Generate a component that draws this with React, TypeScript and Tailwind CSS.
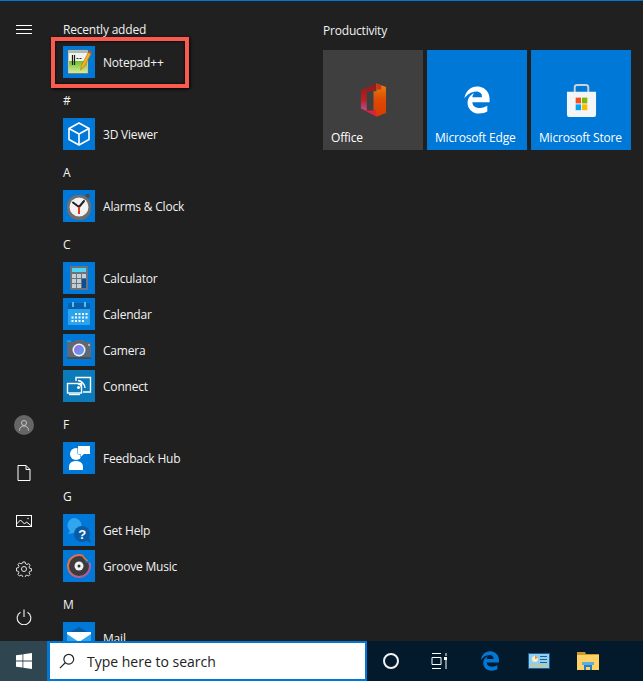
import React from "react";
import { FaEdgeLegacy } from "react-icons/fa";

const Notepad = () => (
  <svg viewBox="0 0 32 32" className="w-8 h-8">
    <defs>
      <linearGradient id="np" x1="0" y1="0" x2="0" y2="1">
        <stop offset="0" stopColor="#6fc02a" />
        <stop offset="1" stopColor="#d6ec9a" />
      </linearGradient>
    </defs>
    <rect x="5" y="4" width="20" height="23.500" fill="#f1f3ee" stroke="#66705f" strokeWidth="0.7" />
    <rect x="5.500" y="4.500" width="19" height="2.500" fill="#aebbb4" />
    <rect x="6" y="15" width="18" height="12" fill="url(#np)" />
    <path d="M9.500 9v10M11.500 9v10" stroke="#1c1c1c" strokeWidth="1.200" />
    <path d="M13.500 12.500h2M16.500 12.500h2" stroke="#333" strokeWidth="1.200" />
    <path d="M26.500 4.500L18.500 19l-1 5 3.800-3.300L28.800 6.500z" fill="#f3b01c" stroke="#9a6a10" strokeWidth="0.5" />
    <path d="M26.500 4.500l2.300 2-1 1.700-2.300-2z" fill="#b5482a" />
  </svg>
);
const Viewer = () => (
  <svg viewBox="0 0 32 32" className="w-8 h-8" fill="none" stroke="#fff" strokeWidth="1.600" strokeLinejoin="round">
    <path d="M16 5l10 5.500v11L16 27 6 21.500v-11z" />
    <path d="M6 10.500L16 16l10-5.500M16 16v11" />
  </svg>
);
const Alarm = () => (
  <svg viewBox="0 0 32 32" className="w-8 h-8">
    <circle cx="24.500" cy="6" r="2.300" fill="#4a4a4a" />
    <rect x="4" y="5" width="24" height="25" rx="11" fill="#6e6e6e" />
    <circle cx="16" cy="17" r="9.500" fill="#f2f2f2" />
    <path d="M16 17L10 12.500M16 17l5-6" stroke="#222" strokeWidth="2" strokeLinecap="round" />
    <path d="M16 17v7" stroke="#e03c20" strokeWidth="2" />
  </svg>
);
const Calculator = () => (
  <svg viewBox="0 0 32 32" className="w-8 h-8">
    <rect x="7" y="4" width="18" height="24" rx="1" fill="#68747f" />
    <rect x="9" y="6" width="14" height="4" fill="#4fd5f2" />
    {[12, 17, 22].map((y) =>
      [9, 14].map((x) => <rect key={`${x}-${y}`} x={x} y={y} width="4" height="4" fill="#c6ced5" />)
    )}
    <rect x="19" y="12" width="4" height="4" fill="#c6ced5" />
    <rect x="19" y="17" width="4" height="9" fill="#0a4f94" />
  </svg>
);
const Calendar = () => (
  <svg viewBox="0 0 32 32" className="w-8 h-8">
    <rect x="5" y="7" width="22" height="20" rx="1" fill="#2aa4ec" />
    <path d="M6 5h20a1 1 0 011 1v5H5V6a1 1 0 011-1z" fill="#0b5fa8" />
    <rect x="9" y="4" width="2" height="5" fill="#4fc3f7" />
    <rect x="21" y="4" width="2" height="5" fill="#4fc3f7" />
    {[15, 18.500, 22].map((y) =>
      [9, 12.500, 16, 19.500, 23].map((x) =>
        (y === 15 && x < 12) || (y === 22 && x > 20) ? null : (
          <rect key={`${x}-${y}`} x={x - 0.5} y={y} width="2" height="2" fill="#fff" />
        )
      )
    )}
  </svg>
);
const Camera = () => (
  <svg viewBox="0 0 32 32" className="w-8 h-8">
    <defs>
      <linearGradient id="lens" x1="0" y1="0" x2="1" y2="1">
        <stop offset="0" stopColor="#b060e0" />
        <stop offset="1" stopColor="#40b0f0" />
      </linearGradient>
    </defs>
    <path d="M4 8h7l1-2h9l1 2h6v17H4z" fill="#5f6973" />
    <rect x="4" y="6.500" width="4" height="1.500" fill="#2a9ee8" />
    <rect x="4" y="23" width="24" height="2" fill="#474f57" />
    <circle cx="16" cy="16" r="6.500" fill="#f2f2f2" />
    <circle cx="16" cy="16" r="5" fill="url(#lens)" />
    <rect x="25" y="10" width="2" height="2" fill="#aab2b8" />
  </svg>
);
const Connect = () => (
  <svg viewBox="0 0 32 32" className="w-8 h-8" fill="none" stroke="#fff" strokeWidth="1.400">
    <path d="M13 11V7.500h14.500v14.500H20" />
    <rect x="4.500" y="13.500" width="14" height="9.500" />
    <path d="M6 24.500h11" />
    <path d="M15 10.500a8 8 0 017 7.500M15 14a4 4 0 013.500 4" />
    <circle cx="15.500" cy="17.500" r="0.800" fill="#fff" />
  </svg>
);
const Feedback = () => (
  <svg viewBox="0 0 32 32" className="w-8 h-8" fill="#fff">
    <circle cx="13" cy="12" r="6" />
    <path d="M6 28v-3c0-4 3-6 7-6s7 2 7 6v3z" />
    <path d="M15 4h12v8h-6l-3.500 3v-3H15z" stroke="#0078d7" strokeWidth="1" paintOrder="stroke" />
  </svg>
);
const GetHelp = () => (
  <svg viewBox="0 0 32 32" className="w-8 h-8">
    <path d="M11 4a7.500 7.500 0 017.500 7.500c0 4-3 7.500-7.500 7.500l-6 1 2-3a7.500 7.500 0 014-13z" fill="#2fa6ee" />
    <circle cx="19" cy="20" r="8" fill="#0a5ba6" />
    <path d="M22 26l6 3-2-6z" fill="#0a5ba6" />
    <text x="19" y="25" textAnchor="middle" fontSize="13" fontWeight="700" fill="#fff" fontFamily="Liberation Sans, sans-serif">?</text>
  </svg>
);
const Groove = () => (
  <svg viewBox="0 0 32 32" className="w-8 h-8">
    <defs>
      <linearGradient id="gr" x1="0" y1="0" x2="1" y2="1">
        <stop offset="0" stopColor="#ee7a30" />
        <stop offset="1" stopColor="#9a58c0" />
      </linearGradient>
    </defs>
    <circle cx="16" cy="16" r="12" fill="url(#gr)" />
    <circle cx="16" cy="16" r="10" fill="#3c3a3a" />
    <path d="M20 3l8 1 1 8-6 1z" fill="#0078d7" />
    <path d="M20 7l4.500 4" stroke="#ee7a30" strokeWidth="1.500" />
    <circle cx="16" cy="16" r="4.500" fill="#f2f2f2" />
    <circle cx="16" cy="16" r="1.500" fill="#333" />
  </svg>
);
const Mail = () => (
  <svg viewBox="0 0 32 32" className="w-8 h-8">
    <path d="M4 12L16 5l12 7v14H4z" fill="#0a5ba6" />
    <path d="M4 12h24v14H4z" fill="#2fa6ee" />
    <path d="M4 10h24v2L16 20 4 12z" fill="#fff" />
  </svg>
);

const Office = () => (
  <svg viewBox="0 0 28 34" className="h-[34px] w-[27px]">
    <defs>
      <linearGradient id="o1" x1="0" y1="0" x2="0" y2="1">
        <stop offset="0" stopColor="#8f1a1a" />
        <stop offset="0.6" stopColor="#b52222" />
        <stop offset="1" stopColor="#b8509c" />
      </linearGradient>
      <linearGradient id="o2" x1="0" y1="0" x2="0" y2="1">
        <stop offset="0" stopColor="#ea8010" />
        <stop offset="0.5" stopColor="#dc4a04" />
        <stop offset="1" stopColor="#d83b01" />
      </linearGradient>
    </defs>
    <path d="M17 0L1 7v19l6 2V9l10-3z" fill="url(#o1)" />
    <path d="M1 26l16 8 4-1v-5H7z" fill="#e2203a" />
    <path d="M17 0l10 3.500v27L17 34V28h-3V8h3z" fill="url(#o2)" />
    <path d="M17 0l5 1.700V6h-5z" fill="#c33616" />
  </svg>
);
const Store = () => (
  <svg viewBox="0 0 32 34" className="h-[33px] w-[31px]">
    <path d="M9 9V3.500C9 2 10 1 11.500 1h9C22 1 23 2 23 3.500V9" fill="none" stroke="#cdd2d6" strokeWidth="2" />
    <path d="M1 8h30v24a2 2 0 01-2 2H3a2 2 0 01-2-2z" fill="#f4f5f6" />
    <rect x="10" y="14" width="5.500" height="6" fill="#f25022" />
    <rect x="16.500" y="14" width="5.500" height="6" fill="#7fba00" />
    <rect x="10" y="21" width="5.500" height="6" fill="#00a4ef" />
    <rect x="16.500" y="21" width="5.500" height="6" fill="#ffb900" />
  </svg>
);

type App = { name: string; icon: React.ReactNode; bg?: string };

const groups: { title: string; apps: App[] }[] = [
  { title: "#", apps: [{ name: "3D Viewer", icon: <Viewer /> }] },
  { title: "A", apps: [{ name: "Alarms & Clock", icon: <Alarm /> }] },
  {
    title: "C",
    apps: [
      { name: "Calculator", icon: <Calculator /> },
      { name: "Calendar", icon: <Calendar /> },
      { name: "Camera", icon: <Camera /> },
      { name: "Connect", icon: <Connect />, bg: "bg-[#0c7ab8]" },
    ],
  },
  { title: "F", apps: [{ name: "Feedback Hub", icon: <Feedback /> }] },
  {
    title: "G",
    apps: [
      { name: "Get Help", icon: <GetHelp /> },
      { name: "Groove Music", icon: <Groove /> },
    ],
  },
  { title: "M", apps: [{ name: "Mail", icon: <Mail /> }] },
];

const Row = ({ app }: { app: App }) => (
  <div className="flex h-9 shrink-0 items-center gap-2">
    <div className={`h-8 w-8 shrink-0 ${app.bg ?? "bg-[#0078d7]"}`}>{app.icon}</div>
    <span className="pt-[2px]">{app.name}</span>
  </div>
);

const Tile = ({ label, bg, children }: { label: string; bg: string; children: React.ReactNode }) => (
  <div className={`relative flex h-[100px] w-[100px] items-center justify-center ${bg}`}>
    {children}
    <div className="absolute bottom-[3px] left-2 text-white">{label}</div>
  </div>
);

export default function App() {
  return (
    <div
      className="flex h-[681px] w-[643px] flex-col overflow-hidden bg-[#202020] text-[12px] tracking-[-0.2px] text-[#f2f2f2]"
      style={{ fontFamily: '"Open Sans", sans-serif' }}
    >
      <div className="h-px shrink-0 bg-[#0078d7]" />
      <div className="flex min-h-0 flex-1">
        <nav className="flex w-[48px] shrink-0 flex-col items-center">
          <div className="mt-[24px] flex w-4 flex-col gap-[3px]">
            <div className="h-px bg-white" />
            <div className="h-px bg-white" />
            <div className="h-px bg-white" />
          </div>
          <div className="mt-auto flex flex-col">
            <div className="flex h-12 w-12 items-center justify-center">
              <div className="flex h-5 w-5 items-center justify-center rounded-full bg-[#666]">
                <svg viewBox="0 0 12 12" className="h-3 w-3" fill="none" stroke="#ccc" strokeWidth="0.9">
                  <circle cx="6" cy="4" r="2.500" />
                  <path d="M1.500 11.500c0-3 2-4.500 4.500-4.500s4.500 1.500 4.500 4.500" />
                </svg>
              </div>
            </div>
            <div className="flex h-12 w-12 items-center justify-center">
              <svg viewBox="0 0 14 16" className="h-4 w-[14px]" fill="none" stroke="#fff" strokeWidth="1">
                <path d="M1 .5h8l4 4v11H1zM9 .5v4h4" />
              </svg>
            </div>
            <div className="flex h-12 w-12 items-center justify-center">
              <svg viewBox="0 0 16 12" className="h-3 w-4" fill="none" stroke="#fff" strokeWidth="1">
                <rect x=".5" y=".5" width="15" height="11" />
                <path d="M.5 9l4-4 4 4 2-2 5 4" />
                <circle cx="12" cy="3.500" r=".7" fill="#fff" stroke="none" />
              </svg>
            </div>
            <div className="flex h-12 w-12 items-center justify-center">
              <svg viewBox="0 0 16 16" className="h-4 w-4" fill="none" stroke="#e6e6e6" strokeWidth="1">
                <circle cx="8" cy="8" r="2.500" />
                <path d="M6.800 .7h2.400l.4 2 1.500.7 1.800-1 1.500 1.800-1.100 1.700.6 1.500 2 .4v2.400l-2 .4-.6 1.500 1.100 1.700-1.500 1.700-1.800-1-1.500.7-.4 2H6.800l-.4-2-1.500-.7-1.800 1-1.500-1.700 1.100-1.700-.6-1.500-2-.4V7.100l2-.4.6-1.500-1.100-1.700 1.500-1.800 1.800 1 1.500-.7z" transform="translate(.4 .3) scale(.95)" />
              </svg>
            </div>
            <div className="flex h-12 w-12 items-center justify-center">
              <svg viewBox="0 0 16 16" className="h-4 w-4" fill="none" stroke="#f2f2f2" strokeWidth="1.100">
                <path d="M8 .5v7.500M4.500 3.200a6.800 6.800 0 107 0" />
              </svg>
            </div>
          </div>
        </nav>

        <div className="relative w-[275px] shrink-0 overflow-hidden pl-[15px]">
          <div className="flex h-[43px] items-end pb-[5px]">Recently added</div>
          <Row app={{ name: "Notepad++", icon: <Notepad /> }} />
          {groups.map((g) => (
            <div key={g.title} className="mt-1 flex flex-col">
              <div className="flex h-8 items-center pt-[2px]">{g.title}</div>
              {g.apps.map((a) => (
                <Row key={a.name} app={a} />
              ))}
            </div>
          ))}
          <div className="absolute left-[3px] top-[36px] h-[51px] w-[138px] border-4 border-[#fb5a4e] shadow-[inset_0_0_3px_#000,1px_1px_3px_#000]" />
        </div>

        <div className="flex-1">
          <div className="flex h-[49px] items-center pt-[10px]">Productivity</div>
          <div className="flex gap-1">
            <Tile label="Office" bg="bg-[#3f3f3f]">
              <Office />
            </Tile>
            <Tile label="Microsoft Edge" bg="bg-[#0078d7]">
              <FaEdgeLegacy className="h-[28px] w-[28px] text-white" />
            </Tile>
            <Tile label="Microsoft Store" bg="bg-[#0078d7]">
              <Store />
            </Tile>
          </div>
        </div>
      </div>

      <div className="flex h-10 shrink-0 items-stretch bg-[#021a2b]">
        <div className="flex w-[47px] items-center justify-center bg-[#2f4651]">
          <svg viewBox="0 0 16 16" className="h-4 w-4" fill="#fff">
            <path d="M0 2.300l6.500-.9v6.200H0zM7.300 1.300L16 0v7.600H7.300zM0 8.400h6.500v6.200L0 13.700zM7.300 8.400H16V16l-8.700-1.300z" />
          </svg>
        </div>
        <div className="flex w-[320px] items-center gap-3 border-2 border-l-[3px] border-[#0078d7] bg-white pl-[9px] text-[14px] tracking-normal text-[#222]">
          <svg viewBox="0 0 18 18" className="h-4 w-4" fill="none" stroke="#222" strokeWidth="1.300">
            <circle cx="11" cy="7" r="5.500" />
            <path d="M7 11l-6 6" />
          </svg>
          <span>Type here to search</span>
        </div>
        <div className="ml-4 flex items-center">
          <div className="h-4 w-4 rounded-full border-2 border-[#f2f2f2]" />
        </div>
        <div className="ml-8 flex items-center">
          <svg viewBox="0 0 16 16" className="h-4 w-4" fill="none" stroke="#fff" strokeWidth="1">
            <path d="M1 .5h9M1 15.500h9M1 4.500h9v7H1zM15 0v3M15 7v9" />
            <rect x="13" y="4" width="3.500" height="3" fill="#fff" stroke="none" />
          </svg>
        </div>
        <div className="ml-[33px] flex items-center">
          <FaEdgeLegacy className="h-5 w-5 text-[#0078d7]" />
        </div>
        <div className="ml-[28px] flex items-center">
          <svg viewBox="0 0 22 16" className="h-4 w-[22px]">
            <rect width="22" height="16" fill="#1f5f8f" />
            <rect x="1" y="1" width="20" height="14" fill="#8fd0f2" />
            <circle cx="7" cy="6" r="3" fill="#f8f0d0" />
            <path d="M7 6V3a3 3 0 012.800 2z" fill="#e8902a" />
            <rect x="12" y="3" width="7" height="1" fill="#1f5f8f" />
            <rect x="12" y="6" width="7" height="1" fill="#1f5f8f" />
            <rect x="12" y="9" width="7" height="1" fill="#1f5f8f" />
            <rect x="2" y="12" width="18" height="1.500" fill="#e8c060" />
          </svg>
        </div>
        <div className="ml-[27px] flex items-center">
          <svg viewBox="0 0 22 18" className="h-[18px] w-[22px]">
            <path d="M0 0h8l1 2h13v16H0z" fill="#c99a2e" />
            <rect y="3" width="22" height="15" fill="#ffd266" />
            <path d="M7 18v-6h8v6h-2v-3H9v3z" fill="#2a7fc4" />
            <rect x="5" y="10" width="12" height="3" fill="#55b0ea" />
          </svg>
        </div>
      </div>
    </div>
  );
}
